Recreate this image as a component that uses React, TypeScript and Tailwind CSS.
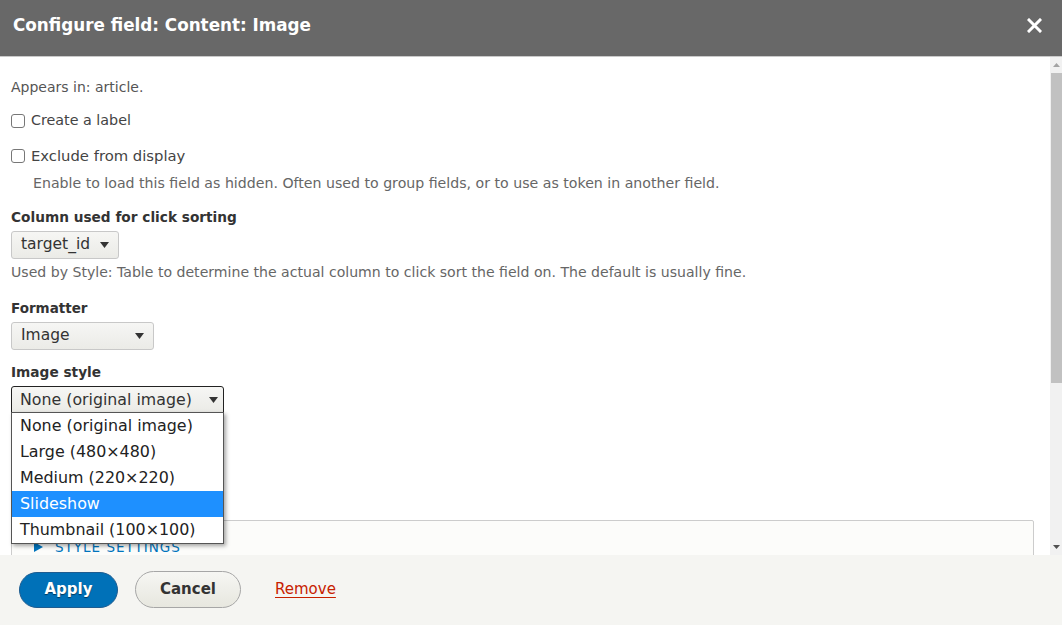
import React from "react";

const font = { fontFamily: '"DejaVu Sans", "Liberation Sans", sans-serif' };

function Arrow() {
  return (
    <svg width="9" height="6" viewBox="0 0 9 6" className="shrink-0">
      <path d="M0 0 L9 0 L4.5 6 Z" fill="#333" />
    </svg>
  );
}

function Checkbox() {
  return <span className="inline-block w-[14px] h-[14px] border border-[#777] rounded-[3px] bg-white shrink-0" />;
}

export default function App() {
  return (
    <div className="w-[1062px] h-[625px] flex flex-col overflow-hidden bg-white text-[#333]" style={font}>
      {/* Header */}
      <div className="h-[57px] shrink-0 bg-[#686868] border-b border-[#c9c9c9] flex items-center justify-between pl-[13px] pr-[20px]">
        <h1 className="text-white font-bold text-[16.8px] leading-[22px] -mt-[7px]">Configure field: Content: Image</h1>
        <svg width="15" height="15" viewBox="0 0 15 15" className="-mt-[6px]">
          <path d="M2 2 L13 13 M13 2 L2 13" stroke="#fff" strokeWidth="3" strokeLinecap="square" />
        </svg>
      </div>

      {/* Body */}
      <div className="h-[498px] shrink-0 flex">
        <div className="flex-1 relative overflow-hidden pl-[11px] pr-[16px]">
          <div className="pt-[21px] text-[14px]">
            <p className="h-[18px] leading-[18px] text-[#555] text-[14px]">Appears in: article.</p>
            <label className="mt-[16px] h-[18px] flex items-center gap-[6px] text-[#444] text-[14.3px]">
              <Checkbox />
              <span>Create a label</span>
            </label>
            <label className="mt-[17px] h-[18px] flex items-center gap-[6px] text-[#444] text-[14.8px]">
              <Checkbox />
              <span>Exclude from display</span>
            </label>
            <p className="mt-[9px] h-[18px] leading-[18px] pl-[22px] text-[#666] text-[14.15px]">
              Enable to load this field as hidden. Often used to group fields, or to use as token in another field.
            </p>
            <p className="mt-[16px] h-[18px] leading-[18px] font-bold text-[#333] text-[13.7px]">Column used for click sorting</p>
            <div className="mt-[5px] w-[108px] h-[28px] border border-[#c8c8c8] rounded-[3px] bg-gradient-to-b from-[#f6f6f4] to-[#ebebe7] flex items-center justify-between pl-[9px] pr-[9px] text-[15.5px] text-[#333]">
              <span>target_id</span>
              <Arrow />
            </div>
            <p className="mt-[4px] h-[18px] leading-[18px] text-[#666] text-[14.08px]">
              Used by Style: Table to determine the actual column to click sort the field on. The default is usually fine.
            </p>
            <p className="mt-[18px] h-[18px] leading-[18px] font-bold text-[#333] text-[13.5px]">Formatter</p>
            <div className="mt-[5px] w-[143px] h-[28px] border border-[#c8c8c8] rounded-[3px] bg-gradient-to-b from-[#f6f6f4] to-[#ebebe7] flex items-center justify-between pl-[9px] pr-[9px] text-[15.5px] text-[#333]">
              <span>Image</span>
              <Arrow />
            </div>
            <p className="mt-[13px] h-[18px] leading-[18px] font-bold text-[#333] text-[13.7px]">Image style</p>
            <div className="relative mt-[5px] w-[213px]">
              <div className="h-[27px] border border-[#222] rounded-t-[3px] bg-gradient-to-b from-[#f6f6f4] to-[#ebebe7] flex items-center justify-between pl-[8px] pr-[5px] text-[15.8px] text-[#333]">
                <span>None (original image)</span>
                <Arrow />
              </div>
              {/* Dropdown menu */}
              <ul className="absolute z-10 left-0 top-[26px] w-[213px] bg-white border border-[#555] shadow-[2px_2px_4px_rgba(0,0,0,0.35)] text-[15.9px] text-[#222] py-0">
                <li className="h-[26px] leading-[26px] pl-[8px]">None (original image)</li>
                <li className="h-[26px] leading-[26px] pl-[8px]">Large (480×480)</li>
                <li className="h-[26px] leading-[26px] pl-[8px]">Medium (220×220)</li>
                <li className="h-[26px] leading-[26px] pl-[8px] bg-[#1e90ff] text-white">Slideshow</li>
                <li className="h-[26px] leading-[26px] pl-[8px]">Thumbnail (100×100)</li>
              </ul>
            </div>
            {/* Fieldset */}
            <div className="mt-[107px] w-[1023px] h-[80px] border border-[#ccc] rounded-[2px] bg-[#fcfcfa] pl-[22px] pt-[16px]">
              <div className="flex items-center gap-[12px] text-[#0074bd] text-[13.5px] uppercase tracking-[1px]">
                <svg width="9" height="10" viewBox="0 0 9 10">
                  <path d="M0 0 L9 5 L0 10 Z" fill="#0074bd" />
                </svg>
                <span>Style settings</span>
              </div>
            </div>
          </div>
        </div>
        {/* Scrollbar */}
        <div className="w-[12px] shrink-0 bg-[#f1f1f1] flex flex-col items-center">
          <div className="h-[16px] w-full flex items-center justify-center">
            <svg width="7" height="4" viewBox="0 0 7 4"><path d="M0 4 L7 4 L3.5 0 Z" fill="#a3a3a3" /></svg>
          </div>
          <div className="w-[11px] h-[310px] bg-[#c1c1c1] ml-[1px]" />
          <div className="flex-1" />
          <div className="h-[16px] w-full flex items-center justify-center">
            <svg width="7" height="4" viewBox="0 0 7 4"><path d="M0 0 L7 0 L3.5 4 Z" fill="#505050" /></svg>
          </div>
        </div>
      </div>

      {/* Footer */}
      <div className="flex-1 bg-[#f5f5f2] flex items-center pl-[19px] gap-[17px] pb-[1px]">
        <button className="w-[99px] h-[36px] rounded-full bg-[#0071b8] border border-[#1e5c90] text-white font-bold text-[15px] [text-shadow:0_1px_1px_rgba(0,0,0,0.5)]">
          Apply
        </button>
        <button className="w-[106px] h-[37px] rounded-full bg-gradient-to-b from-[#f6f6f3] to-[#e7e7df] border border-[#a6a6a6] text-[#333] font-bold text-[15px]">
          Cancel
        </button>
        <a className="ml-[17px] text-[#c72100] underline text-[15px] decoration-[#c72100] underline-offset-[3px]">Remove</a>
      </div>
    </div>
  );
}
